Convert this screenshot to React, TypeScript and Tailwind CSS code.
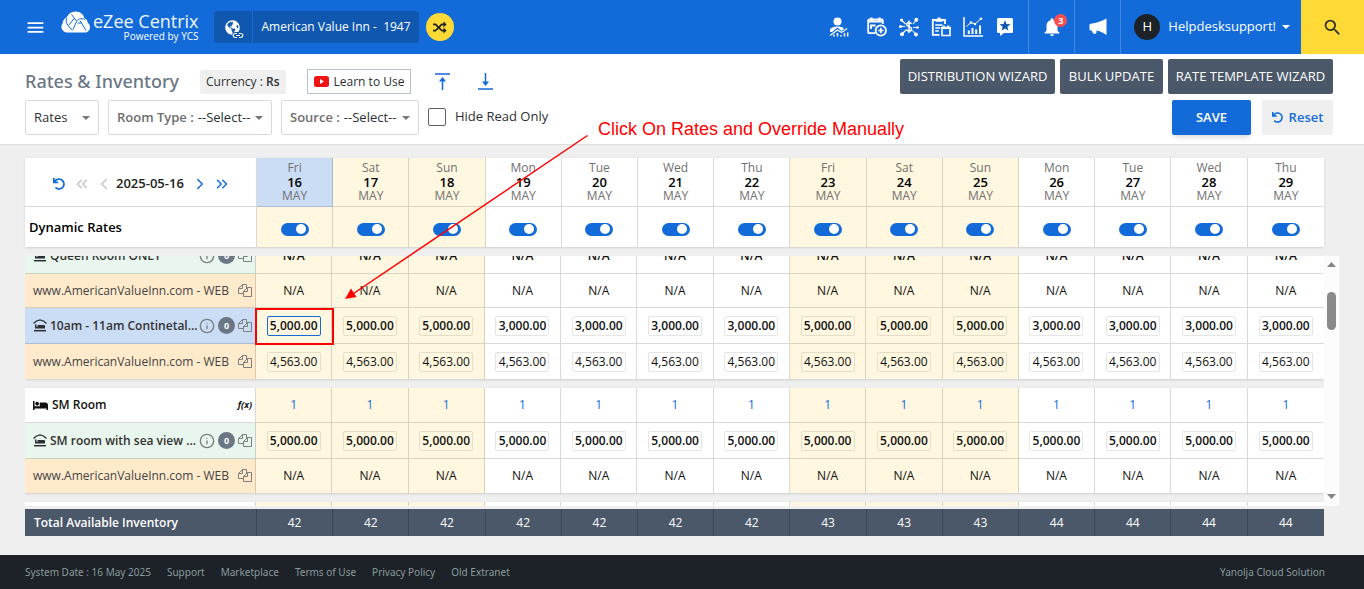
import { useLayoutEffect, useRef, useState } from "react";
import type { ReactNode } from "react";
import { ChevronLeft, ChevronRight, ChevronsLeft, ChevronsRight, Info } from "lucide-react";
import { FaBed, FaGlobeAmericas, FaUndo } from "react-icons/fa";
import { ImShuffle } from "react-icons/im";
import { MdMenu, MdNotifications, MdSearch } from "react-icons/md";

interface Day {
  name: string;
  date: number;
  weekend: boolean;
  total: number;
}

type RowKind = "room" | "rate" | "channel";

interface RateRow {
  id: string;
  kind: RowKind;
  label: string;
  weekday: string;
  weekend: string;
  height: string;
  selected?: boolean;
}

const names = ["Fri", "Sat", "Sun", "Mon", "Tue", "Wed", "Thu"];

const days: Day[] = Array.from({ length: 14 }, (_, i) => ({
  name: names[i % 7],
  date: 16 + i,
  weekend: i % 7 < 3,
  total: i < 7 ? 42 : i < 10 ? 43 : 44,
}));

const groups: RateRow[][] = [
  [
    { id: "queen", kind: "rate", label: "Queen Room ONLY", weekday: "N/A", weekend: "N/A", height: "h-[36px]" },
    { id: "queen-web", kind: "channel", label: "www.AmericanValueInn.com - WEB", weekday: "N/A", weekend: "N/A", height: "h-[34px]" },
    { id: "cont", kind: "rate", label: "10am - 11am Continetal...", weekday: "3,000.00", weekend: "5,000.00", height: "h-[36px]", selected: true },
    { id: "cont-web", kind: "channel", label: "www.AmericanValueInn.com - WEB", weekday: "4,563.00", weekend: "4,563.00", height: "h-[35px]" },
  ],
  [
    { id: "sm", kind: "room", label: "SM Room", weekday: "1", weekend: "1", height: "h-[35px]" },
    { id: "sm-sea", kind: "rate", label: "SM room with sea view ...", weekday: "5,000.00", weekend: "5,000.00", height: "h-[36px]" },
    { id: "sm-web", kind: "channel", label: "www.AmericanValueInn.com - WEB", weekday: "N/A", weekend: "N/A", height: "h-[34px]" },
  ],
  [{ id: "next", kind: "room", label: "", weekday: "", weekend: "", height: "h-[35px]" }],
];

const footerLinks = ["Support", "Marketplace", "Terms of Use", "Privacy Policy", "Old Extranet"];

function CloudLogo() {
  return (
    <svg viewBox="0 0 30 22" className="h-[22px] w-[30px]" aria-hidden="true">
      <path
        fill="#fff"
        d="M6 21.5a5.6 5.6 0 0 1-4.4-9C2 8.700 4 7.500 5.500 6.500 7.500 2.500 10.500.5 14.500.5c4.500 0 8 2.800 8.900 6.700 2 .6 3.300 2.600 3.300 4.500 1.600 1.200 2.300 2.900 2.300 4.500 0 3-2.300 5.300-5.200 5.300z"
      />
      <g fill="none" stroke="#126bd9" strokeWidth="1">
        <path d="M6 7c-1.500 3-1 5 1 7.500l4.500 5M7.500 14.500 13.500 7M10.500 3.500l5 6.500M24 8.500c-4-2-7.500-.5-9 3l-3 7M16.500 12h4l4.500 7.500M20.500 12l-1.500-2.500" />
      </g>
    </svg>
  );
}

function PropertyIcon() {
  return (
    <span className="relative">
      <FaGlobeAmericas size={15} />
      <svg viewBox="0 0 12 7" className="absolute -right-1 -bottom-1 h-[7px] w-[12px]" aria-hidden="true">
        <rect width="12" height="7" rx="3.500" fill="#1058af" />
        <path d="M5 1.500H3.200a2 2 0 0 0 0 4H5M7 1.500h1.800a2 2 0 0 1 0 4H7M4 3.500h4" fill="none" stroke="#fff" strokeWidth="1.200" />
      </svg>
    </span>
  );
}

function AgentIcon() {
  return (
    <svg viewBox="0 0 20 20" className="size-5" fill="none" stroke="#fff" aria-hidden="true">
      <circle cx="8.500" cy="4.500" r="4" fill="#fff" stroke="none" />
      <path d="M1 15v-1.500c0-3 4-4 7.500-4 2.500 0 5 .5 6.500 2l-2.500 2.500-4-3.500L3 15z" fill="#fff" stroke="none" />
      <path d="M1 18.500 8.500 13l4 2.500L18 11.500" strokeWidth="1.300" />
      <path d="M5 19.500v-2M8.500 19.500V16M12 19.500v-1.500M15.500 19.500V16M18.700 19.500v-4" strokeWidth="1.500" />
    </svg>
  );
}

function CalendarIcon() {
  return (
    <svg viewBox="0 0 20 20" className="size-5" fill="none" stroke="#fff" aria-hidden="true">
      <path d="M8 16.200H2.200a1 1 0 0 1-1-1V3.500a1 1 0 0 1 1-1h12.600a1 1 0 0 1 1 1V7" strokeWidth="1.800" />
      <path d="M1 4.500h15M4.500.5V4M12.500.5V4" strokeWidth="2.200" />
      <path d="M4 12V8.500h4.500" strokeWidth="1.800" />
      <circle cx="13.800" cy="13.500" r="5.200" strokeWidth="1.800" />
      <path d="M13.800 10.800v5.400M11.100 13.500h5.400" strokeWidth="1.700" />
    </svg>
  );
}

function NetworkIcon() {
  return (
    <svg viewBox="0 0 20 20" className="size-5" fill="none" stroke="#fff" aria-hidden="true">
      <path d="M12.500 6.800c-.5-1-1.300-1.400-2.500-1.400-1.500 0-2.400.8-2.400 2 0 3 5 1.600 5 4.500 0 1.300-1 2.100-2.600 2.100-1.300 0-2.300-.5-2.700-1.600M10 3.500v12.500" strokeWidth="1.500" />
      <path d="m2.500 3 4 4M17.500 3l-3.500 4M1.500 9.500H6M14 10.500h4.500M3 17l4-4M17 17.500l-3.500-4" strokeWidth="1.100" />
      <g fill="#fff" stroke="none">
        <circle cx="2.500" cy="3" r="1.500" />
        <circle cx="17.300" cy="2.800" r="2" />
        <circle cx="1.500" cy="9.500" r="1.500" />
        <circle cx="18.500" cy="10.500" r="1.300" />
        <circle cx="3" cy="17.200" r="2" />
        <circle cx="17" cy="17.500" r="2" />
      </g>
    </svg>
  );
}

function ClipboardIcon() {
  return (
    <svg viewBox="0 0 20 20" className="size-5" fill="none" stroke="#fff" aria-hidden="true">
      <path d="M8.500 17.800H1.800V3h3M11 3h3v4" strokeWidth="1.800" />
      <path d="M4.500 1.800h7v3h-7z" fill="#fff" stroke="none" />
      <circle cx="8" cy="1.800" r="1.500" fill="#fff" stroke="none" />
      <path d="M4.300 8h7.200M4.300 11h5M4.300 14h3.500" strokeWidth="1.500" />
      <path d="M11 10.500h8v8h-8z" strokeWidth="1.600" />
      <path d="M10.300 11h9.400M12.800 8.500V11M17.200 8.500V11" strokeWidth="2" />
    </svg>
  );
}

function ChartIcon() {
  return (
    <svg viewBox="0 0 20 20" className="size-5" fill="none" stroke="#fff" aria-hidden="true">
      <path d="M1 0v19h19" strokeWidth="1.500" />
      <path d="M5.800 17v-3.500M9.500 17v-6M13.200 17v-4.500M17 17V8.500" strokeWidth="2" />
      <path d="m3.500 9.500 4.500-4 4 1.500L18 1.500" strokeWidth="1" />
      <g fill="#fff" stroke="none">
        <circle cx="8" cy="5.500" r="1.300" />
        <circle cx="12" cy="7" r="1.200" />
        <circle cx="18" cy="1.800" r="1.300" />
      </g>
    </svg>
  );
}

function ReviewIcon() {
  return (
    <svg viewBox="0 0 20 20" className="size-5" aria-hidden="true">
      <path d="M3.500 1h13A1.500 1.500 0 0 1 18 2.500v12a1.500 1.500 0 0 1-1.500 1.500H9l-4 3v-3H3.500A1.500 1.500 0 0 1 2 14.500v-12A1.500 1.500 0 0 1 3.500 1z" fill="#fff" />
      <path d="m10 3.200 1.500 3.700 4 .3-3.100 2.500 1 3.900L10 11.500l-3.400 2.100 1-3.900-3.100-2.500 4-.3z" fill="#1058af" />
    </svg>
  );
}

function MegaphoneIcon() {
  return (
    <svg viewBox="0 0 18 18" className="size-[18px]" fill="#fff" aria-hidden="true">
      <path d="M17.500.5v16.500Q12 13 7.500 12.500v1.700q-.3 1.800-2 1.700-2-.2-2.500-3.400H1.500Q.5 12.500.5 11.500V7q0-1 1-1.200Q11 4.500 17.500.5z" />
    </svg>
  );
}

function CopyIcon() {
  return (
    <svg viewBox="0 0 14 14" className="h-[14px] w-[14px]" fill="none" stroke="#7b7f80" aria-hidden="true">
      <path d="M5.500 9.500h-5v-5l4-4h4v4" />
      <path d="M4.500.5v4h-4" />
      <path d="M9.500 3.500h4v9h-8v-5z" />
      <path d="M9.500 3.500v4h-4" />
    </svg>
  );
}

function StayIcon() {
  return (
    <svg viewBox="0 0 14 13" className="h-[13px] w-[14px] shrink-0" aria-hidden="true">
      <path d="M.5 4.500 3.500 2l3.500-1 3.500 1 3 2.500" fill="none" stroke="#2b2f33" strokeWidth="1.300" />
      <path d="M2 5.500h1.500V8h1V6h6.500q1 0 1 1v2.500H2z" fill="#2b2f33" />
      <path d="M1 11.700h12" stroke="#2b2f33" strokeWidth="1.500" />
    </svg>
  );
}

function Caret({ className }: { className: string }) {
  return (
    <svg viewBox="0 0 8 4" preserveAspectRatio="none" className={`pointer-events-none shrink-0 ${className}`} aria-hidden="true">
      <path d="M0 0h8L4 4z" fill="currentColor" />
    </svg>
  );
}

function IconButton({ label, children }: { label: string; children: ReactNode }) {
  return (
    <button type="button" aria-label={label} className="flex items-center justify-center">
      {children}
    </button>
  );
}

function Header() {
  return (
    <header className="flex h-[54px] items-center bg-[#126bd9] pl-[25px] text-white">
      <IconButton label="Menu">
        <MdMenu size={21} />
      </IconButton>
      <a href="#" className="ml-[15px] flex items-start pb-1">
        <CloudLogo />
        <span className="ml-0.5 flex flex-col items-end">
          <span className="text-[18px] leading-[21px] text-blue-50">eZee Centrix</span>
          <span className="text-[10px] leading-[8px] font-medium">Powered by YCS</span>
        </span>
      </a>
      <button type="button" className="ml-[15px] flex h-8 items-center rounded-[3px] bg-[#1058af] text-[12px]">
        <span className="flex h-full w-[39px] items-center justify-center border-r border-[#126bd9]">
          <PropertyIcon />
        </span>
        <span className="pr-2 pl-[9px] whitespace-pre">American Value Inn -  1947</span>
      </button>
      <button
        type="button"
        aria-label="Switch property"
        className="ml-[7px] flex size-7 items-center justify-center rounded-full bg-[#ffd935] text-[#1d2228]"
      >
        <ImShuffle size={14} />
      </button>
      <nav className="ml-auto flex items-center gap-3 pr-[13px]">
        <IconButton label="Agents">
          <AgentIcon />
        </IconButton>
        <span className="ml-1.5 flex items-center gap-3">
          <IconButton label="Reservations">
            <CalendarIcon />
          </IconButton>
          <IconButton label="Channels">
            <NetworkIcon />
          </IconButton>
          <IconButton label="Reports">
            <ClipboardIcon />
          </IconButton>
          <IconButton label="Analytics">
            <ChartIcon />
          </IconButton>
          <IconButton label="Reviews">
            <ReviewIcon />
          </IconButton>
        </span>
      </nav>
      <button
        type="button"
        aria-label="Notifications"
        className="relative flex h-full w-[46px] items-center justify-center border-l border-[#4289e0]"
      >
        <MdNotifications size={22} />
        <span className="absolute top-3.5 right-[7px] flex size-[13px] items-center justify-center rounded-full bg-[#ff4d4f] text-[9px] font-bold">
          3
        </span>
      </button>
      <button
        type="button"
        aria-label="Announcements"
        className="flex h-full w-[46px] items-center justify-center border-l border-[#4289e0]"
      >
        <MegaphoneIcon />
      </button>
      <button type="button" className="flex h-full items-center border-l border-[#4289e0] pr-[11px] pl-[13px] text-[13px]">
        <span className="flex size-[26px] items-center justify-center rounded-full bg-[#1d2228]">H</span>
        <span className="ml-2">Helpdesksupport!</span>
        <Caret className="ml-1.5 h-1 w-2 text-white" />
      </button>
      <button
        type="button"
        aria-label="Search"
        className="flex h-full w-[63px] items-center justify-center bg-[#ffd935] text-[#33342b]"
      >
        <MdSearch size={21} />
      </button>
    </header>
  );
}

function FilterSelect({ id, label, width, options }: { id: string; label?: string; width: string; options: string[] }) {
  return (
    <div className={`flex h-[35px] items-center rounded-xs border border-[#d5dae1] px-[8px] text-[13px] ${width}`}>
      {label && (
        <label htmlFor={id} className="mr-1 font-semibold whitespace-nowrap text-[#6c6e70]">
          {label}
        </label>
      )}
      <select id={id} aria-label={label ?? "View"} className="min-w-0 flex-1 appearance-none bg-transparent text-[#2d3033]">
        {options.map((o) => (
          <option key={o}>{o}</option>
        ))}
      </select>
      <Caret className="h-1 w-2 text-[#74777a]" />
    </div>
  );
}

function Toolbar() {
  return (
    <section className="flex justify-between border-b border-[#dedede] bg-white pt-[5px] pr-[31px] pb-[9px] pl-[25px]">
      <div className="pt-2.5">
        <div className="flex h-[25px] items-center text-[12px]">
          <h1 className="font-['Noto_Sans',sans-serif] text-[18px] font-medium text-[#6b7785]">Rates &amp; Inventory</h1>
          <span className="ml-[21px] rounded-xs bg-[#efefef] px-1.5 leading-6 text-[#2d3033]">
            Currency : <b className="font-semibold">Rs</b>
          </span>
          <button type="button" className="ml-[21px] flex h-[25px] items-center gap-[5px] border border-[#b9c2ce] px-1.5 text-[#2d3033]">
            <svg viewBox="0 0 15 11" className="h-[11px] w-[15px]" aria-hidden="true">
              <rect width="15" height="11" rx="2.500" fill="#f01414" />
              <path d="M6 3v5l4-2.500z" fill="#fff" />
            </svg>
            Learn to Use
          </button>
          <button type="button" aria-label="Import rates" className="ml-6">
            <svg viewBox="0 0 15 17" className="h-[17px] w-[15px]" fill="none" stroke="#126bd9" strokeWidth="1.500" aria-hidden="true">
              <path d="M0 1h15M7.500 17V5" />
              <path d="M4 8.500 7.500 4 11 8.500z" fill="#126bd9" stroke="none" />
            </svg>
          </button>
          <button type="button" aria-label="Export rates" className="ml-7">
            <svg viewBox="0 0 15 17" className="h-[17px] w-[15px]" fill="none" stroke="#126bd9" strokeWidth="1.500" aria-hidden="true">
              <path d="M0 16h15M7.500 0v12" />
              <path d="M4 8.500 7.500 13 11 8.500z" fill="#126bd9" stroke="none" />
            </svg>
          </button>
        </div>
        <div className="mt-1.5 flex gap-[9px]">
          <FilterSelect id="view" width="w-[74px]" options={["Rates", "Inventory"]} />
          <FilterSelect id="room-type" label="Room Type :" width="w-[164px]" options={["--Select--"]} />
          <FilterSelect id="source" label="Source :" width="w-[138px]" options={["--Select--"]} />
          <label className="flex h-[33px] items-center gap-[9px] text-[13px] text-[#2d3033]">
            <input type="checkbox" className="size-[18px] appearance-none rounded-xs border border-[#5f6265] bg-white checked:bg-[#126bd9]" />
            Hide Read Only
          </label>
        </div>
      </div>
      <div className="flex flex-col gap-1.5">
        <div className="flex gap-[5px] text-[13px] text-white">
          <button type="button" className="h-[35px] w-[155px] rounded-xs bg-[#4b586a]">DISTRIBUTION WIZARD</button>
          <button type="button" className="h-[35px] w-[103px] rounded-xs bg-[#4b586a]">BULK UPDATE</button>
          <button type="button" className="h-[35px] w-[165px] rounded-xs bg-[#4b586a]">RATE TEMPLATE WIZARD</button>
        </div>
        <div className="flex justify-end gap-[11px] text-[13px] font-semibold">
          <button type="button" className="h-[35px] w-[79px] rounded-xs bg-[#126bd9] text-white shadow-md">SAVE</button>
          <button type="button" className="flex h-[35px] w-[71px] items-center justify-center gap-1.5 rounded-xs bg-[#efefef] text-[#126bd9]">
            <FaUndo size={11} />
            Reset
          </button>
        </div>
      </div>
    </section>
  );
}

function DayHeader() {
  const [enabled, setEnabled] = useState<boolean[]>(() => days.map(() => true));

  const toggle = (index: number) => setEnabled((prev) => prev.map((v, i) => (i === index ? !v : v)));

  return (
    <table className="w-full table-fixed border-separate border-spacing-0 bg-white text-[12px] shadow-sm">
      <thead>
        <tr>
          <th className="h-[49px] w-[232px] border-r border-b border-black/15 p-0 pt-1 font-semibold">
            <div className="flex items-center pl-[28px] text-[13px] text-[#126bd9]">
              <IconButton label="Today">
                <FaUndo size={12} />
              </IconButton>
              <span className="ml-2 flex gap-1 text-[#c4c4c4]">
                <IconButton label="Back two weeks">
                  <ChevronsLeft size={18} />
                </IconButton>
                <IconButton label="Back one day">
                  <ChevronLeft size={18} />
                </IconButton>
              </span>
              <span className="ml-[3px] text-[13px] text-[#222]">2025-05-16</span>
              <span className="ml-[7px] flex gap-1">
                <IconButton label="Forward one day">
                  <ChevronRight size={18} />
                </IconButton>
                <IconButton label="Forward two weeks">
                  <ChevronsRight size={18} />
                </IconButton>
              </span>
            </div>
          </th>
          {days.map((day, i) => (
            <th
              key={day.date}
              className={`border-r border-b border-black/15 p-0 text-center leading-[14px] font-normal text-[#707070] last:border-r-0 ${
                i === 0 ? "bg-[#cbdcf5]" : day.weekend ? "bg-[#fff7df]" : "bg-white"
              }`}
            >
              {day.name}
              <b className="block text-[13px] font-semibold text-black">{day.date}</b>
              MAY
            </th>
          ))}
        </tr>
      </thead>
      <tbody>
        <tr>
          <th className="h-[40px] border-r border-black/15 p-0 pt-px pl-1 text-left text-[13px] font-semibold">Dynamic Rates</th>
          {days.map((day, i) => (
            <td
              key={day.date}
              className={`border-r border-black/15 p-0 last:border-r-0 ${day.weekend ? "bg-[#fff7df]" : "bg-white"}`}
            >
              <input
                type="checkbox"
                role="switch"
                aria-label={`Dynamic rates ${day.date} May`}
                checked={enabled[i]}
                onChange={() => toggle(i)}
                className="mx-auto mt-1 flex h-[13px] w-7 appearance-none rounded-full bg-gray-400 px-[3px] pt-px before:size-[10px] before:rounded-full before:bg-white checked:justify-end checked:bg-[#126bd9]"
              />
            </td>
          ))}
        </tr>
      </tbody>
    </table>
  );
}

function rowLabelColor(row: RateRow) {
  if (row.selected) return "bg-[#cbdcf5]";
  if (row.kind === "rate") return "bg-[#e9f6ed]";
  if (row.kind === "channel") return "bg-[#ffebcc]";
  return "bg-white";
}

function RowLabel({ row }: { row: RateRow }) {
  if (row.label === "") return null;

  return (
    <div className="flex items-center pr-[3px] pl-2">
      {row.kind === "rate" && <StayIcon />}
      {row.kind === "room" && <FaBed size={15} className="shrink-0" />}
      <span
        className={`min-w-0 flex-1 whitespace-nowrap ${
          row.kind === "channel" ? "font-normal text-[#444]" : row.kind === "rate" ? "ml-[3px] font-semibold text-[#333]" : "ml-1 font-semibold text-[#111]"
        }`}
      >
        {row.label}
      </span>
      {row.kind === "room" && <i className="text-[9px] font-bold">f(x)</i>}
      {row.kind === "rate" && (
        <>
          <IconButton label="Rate details">
            <Info size={16} color="#7b7f80" strokeWidth={2} />
          </IconButton>
          <span className="mx-[3px] flex size-[17px] shrink-0 items-center justify-center rounded-full bg-[#6b7785] text-[9px] font-bold text-white">0</span>
        </>
      )}
      {row.kind !== "room" && (
        <IconButton label="Copy rates">
          <CopyIcon />
        </IconButton>
      )}
    </div>
  );
}

function RateCell({ row, index, day }: { row: RateRow; index: number; day: Day }) {
  const value = day.weekend ? row.weekend : row.weekday;

  if (row.kind === "room") {
    return <a href="#" className="text-[#126bd9]">{value}</a>;
  }
  if (value === "N/A") {
    return <span className={row.kind === "rate" ? "font-semibold" : ""}>{value}</span>;
  }
  return (
    <input
      type="text"
      defaultValue={value}
      aria-label={`${row.label} ${day.date} May`}
      className={`mx-auto block h-5 w-[54px] rounded-xs border bg-transparent p-0 text-center text-[12px] ${
        row.kind === "rate" ? "font-semibold" : ""
      } ${row.selected && index === 0 ? "border-[#126bd9]" : "border-black/10"}`}
    />
  );
}

function RateGrid() {
  const viewport = useRef<HTMLDivElement>(null);

  useLayoutEffect(() => {
    if (viewport.current) viewport.current.scrollTop = 18;
  }, []);

  return (
    <div className="mt-[9px] flex h-[250px]">
      <div ref={viewport} className="flex min-w-0 flex-1 flex-col gap-[9px] overflow-hidden">
        {groups.map((rows) => (
          <table
            key={rows[0].id}
            className="w-full shrink-0 table-fixed border-separate border-spacing-0 bg-white text-[12px] text-[#111] shadow-sm"
          >
            <tbody>
              {rows.map((row, r) => {
                const line = r < rows.length - 1 ? "border-b" : "";
                return (
                  <tr key={row.id}>
                    <th className={`w-[231px] border-r border-black/15 p-0 text-left ${line} ${row.height} ${rowLabelColor(row)}`}>
                      <RowLabel row={row} />
                    </th>
                    {days.map((day, i) => (
                      <td
                        key={day.date}
                        className={`border-r border-black/15 p-0 text-center last:border-r-0 ${line} ${
                          day.weekend ? "bg-[#fff7df]" : "bg-white"
                        }`}
                      >
                        <RateCell row={row} index={i} day={day} />
                      </td>
                    ))}
                  </tr>
                );
              })}
            </tbody>
          </table>
        ))}
      </div>
      <div className="flex w-[15px] flex-col items-center bg-[#fcfcfc] pt-1.5 pb-[7px] text-[#858585]" aria-hidden="true">
        <Caret className="h-[5px] w-[9px] rotate-180" />
        <span className="mt-[25px] h-[38px] w-[9px] rounded-full bg-[#8a8a8a]" />
        <Caret className="mt-auto h-[5px] w-[9px]" />
      </div>
    </div>
  );
}

function Totals() {
  return (
    <table className="mt-[3px] w-full table-fixed border-separate border-spacing-0 bg-[#4b586a] text-[12px] text-white">
      <tbody>
        <tr>
          <th className="h-[27px] w-[232px] border-r border-[#3c4858] p-0 pt-px pl-[9px] text-left font-semibold">Total Available Inventory</th>
          {days.map((day) => (
            <td key={day.date} className="border-r border-[#3c4858] p-0 pt-px text-center last:border-r-0">
              {day.total}
            </td>
          ))}
        </tr>
      </tbody>
    </table>
  );
}

// Callout drawn over the grid: text, arrow and a frame round the first rate
function Callout() {
  return (
    <div className="pointer-events-none absolute inset-0">
      <p className="absolute top-[118px] left-[598px] font-['Liberation_Sans',sans-serif] text-[18px] leading-[22px] text-[#ff0000]">
        Click On Rates and Override Manually
      </p>
      <svg className="absolute top-0 left-0 h-[360px] w-[600px]" viewBox="0 0 600 360" aria-hidden="true">
        <path d="M587.500 135.500 352 294.500" stroke="#f00" strokeWidth="1.500" />
        <path d="M345 299l6-10.500 5.500 8.500z" fill="#f00" />
        <rect x="256" y="309" width="77" height="35" fill="none" stroke="#f00" strokeWidth="2" />
      </svg>
    </div>
  );
}

export default function App() {
  return (
    <div className="relative flex min-h-screen flex-col bg-[#efefef] font-['Open_Sans','Noto_Sans',sans-serif]">
      <Header />
      <Toolbar />
      <main className="flex-1 px-[25px] pt-[13px]">
        <div className="pr-[15px]">
          <DayHeader />
        </div>
        <RateGrid />
        <div className="pr-[15px]">
          <Totals />
        </div>
      </main>
      <footer className="flex h-[34px] items-center gap-4 bg-[#1d2228] pr-[39px] pl-[25px] font-['Noto_Sans',sans-serif] text-[10px] text-[#8b9a9c]">
        <span>System Date : 16 May 2025</span>
        {footerLinks.map((link) => (
          <a key={link} href="#">
            {link}
          </a>
        ))}
        <span className="ml-auto">Yanolja Cloud Solution</span>
      </footer>
      <Callout />
    </div>
  );
}
